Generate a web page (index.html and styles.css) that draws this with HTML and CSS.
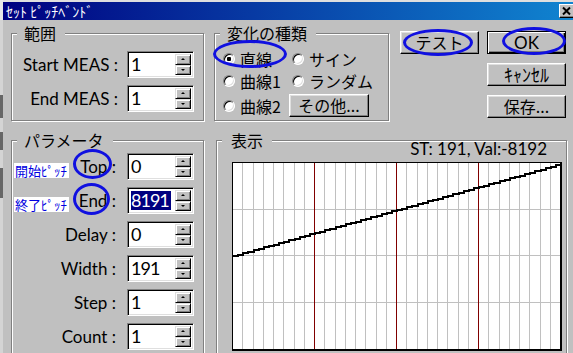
FILE: index.html
```html
<!DOCTYPE html>
<html lang="ja">
<head>
<meta charset="utf-8">
<title>ｾｯﾄ ﾋﾟｯﾁﾍﾞﾝﾄﾞ</title>
<link rel="stylesheet" href="styles.css">
</head>
<body>
<div class="screen">
  <div class="edge"></div>
  <div class="dialog">
    <div class="titlebar">
      <span class="title">ｾｯﾄ ﾋﾟｯﾁﾍﾞﾝﾄﾞ</span>
      <span class="close"><svg width="12" height="10" viewBox="0 0 12 10"><path d="M2 1.5L9 8.5M9 1.5L2 8.5" stroke="#000" stroke-width="2" fill="none"/></svg></span>
    </div>
    <div class="content">
      <div class="toprow">
        <section class="group g-range">
          <div class="legend">範囲</div>
          <div class="rows">
            <div class="row"><span class="lbl">Start MEAS :</span><div class="spinbox"><span class="val">1</span><span class="spin"><span class="sb up"></span><span class="sb down"></span></span></div></div>
            <div class="row"><span class="lbl">End MEAS :</span><div class="spinbox"><span class="val">1</span><span class="spin"><span class="sb up"></span><span class="sb down"></span></span></div></div>
          </div>
        </section>
        <section class="group g-kind">
          <div class="legend">変化の種類</div>
          <div class="radios">
            <div class="rrow r1"><span class="opt"><i class="radio on"></i>直線</span><span class="opt"><i class="radio"></i>サイン</span></div>
            <div class="rrow r2"><span class="opt"><i class="radio"></i>曲線1</span><span class="opt"><i class="radio"></i>ランダム</span></div>
            <div class="rrow r3"><span class="opt"><i class="radio"></i>曲線2</span><button class="btn other">その他...</button></div>
          </div>
        </section>
        <div class="buttons">
          <button class="btn test">テスト</button>
          <button class="btn default ok">OK</button>
          <button class="btn cancel">ｷｬﾝｾﾙ</button>
          <button class="btn save">保存...</button>
        </div>
      </div>
      <div class="bottomrow">
        <section class="group g-param">
          <div class="legend">パラメータ</div>
          <div class="rows">
            <div class="row"><span class="lbl tagged"><span class="tag">開始ﾋﾟｯﾁ</span><span>Top :</span></span><div class="spinbox"><span class="val">0</span><span class="spin"><span class="sb up"></span><span class="sb down"></span></span></div></div>
            <div class="row"><span class="lbl tagged"><span class="tag">終了ﾋﾟｯﾁ</span><span>End :</span></span><div class="spinbox"><span class="val"><span class="sel">8191</span></span><span class="spin"><span class="sb up"></span><span class="sb down"></span></span></div></div>
            <div class="row"><span class="lbl">Delay :</span><div class="spinbox"><span class="val">0</span><span class="spin"><span class="sb up"></span><span class="sb down"></span></span></div></div>
            <div class="row"><span class="lbl">Width :</span><div class="spinbox"><span class="val">191</span><span class="spin"><span class="sb up"></span><span class="sb down"></span></span></div></div>
            <div class="row"><span class="lbl">Step :</span><div class="spinbox"><span class="val">1</span><span class="spin"><span class="sb up"></span><span class="sb down"></span></span></div></div>
            <div class="row"><span class="lbl">Count :</span><div class="spinbox"><span class="val">1</span><span class="spin"><span class="sb up"></span><span class="sb down"></span></span></div></div>
          </div>
        </section>
        <section class="group g-disp">
          <div class="disp-head">
            <div class="legend">表示</div>
            <div class="st">ST: 191, Val:-8192</div>
          </div>
          <svg class="chart" width="330" height="189" viewBox="0 0 330 189" shape-rendering="crispEdges">
            <rect x="0" y="0" width="330" height="189" fill="#fff"/>
            <path d="M10.5 1V187M21.5 1V187M31.5 1V187M41.5 1V187M51.5 1V187M62.5 1V187M72.5 1V187M92.5 1V187M103.5 1V187M113.5 1V187M123.5 1V187M133.5 1V187M144.5 1V187M154.5 1V187M174.5 1V187M185.5 1V187M195.5 1V187M205.5 1V187M215.5 1V187M226.5 1V187M236.5 1V187M256.5 1V187M267.5 1V187M277.5 1V187M287.5 1V187M297.5 1V187M308.5 1V187M318.5 1V187" stroke="#c0c0c0" stroke-width="1" fill="none"/>
            <path d="M1 47.5H328M1 93.5H328M1 140.5H328" stroke="#c0c0c0" stroke-width="1" fill="none"/>
            <path d="M82.5 1V187M164.5 1V187M246.5 1V187" stroke="#800000" stroke-width="1" fill="none"/>
            <path d="M1 94h5.125v-1.4375h5.125v-1.4375h5.125v-1.4375h5.125v-1.4375h5.125v-1.4375h5.125v-1.4375h5.125v-1.4375h5.125v-1.4375
              h5.125v-1.4375h5.125v-1.4375h5.125v-1.4375h5.125v-1.4375h5.125v-1.4375h5.125v-1.4375h5.125v-1.4375h5.125v-1.4375
              h5.125v-1.4375h5.125v-1.4375h5.125v-1.4375h5.125v-1.4375h5.125v-1.4375h5.125v-1.4375h5.125v-1.4375h5.125v-1.4375
              h5.125v-1.4375h5.125v-1.4375h5.125v-1.4375h5.125v-1.4375h5.125v-1.4375h5.125v-1.4375h5.125v-1.4375h5.125v-1.4375
              h5.125v-1.4375h5.125v-1.4375h5.125v-1.4375h5.125v-1.4375h5.125v-1.4375h5.125v-1.4375h5.125v-1.4375h5.125v-1.4375
              h5.125v-1.4375h5.125v-1.4375h5.125v-1.4375h5.125v-1.4375h5.125v-1.4375h5.125v-1.4375h5.125v-1.4375h5.125v-1.4375
              h5.125v-1.4375h5.125v-1.4375h5.125v-1.4375h5.125v-1.4375h5.125v-1.4375h5.125v-1.4375h5.125v-1.4375h5.125v-1.4375
              h5.125v-1.4375h5.125v-1.4375h5.125v-1.4375h5.125v-1.4375h5.125v-1.4375h5.125v-1.4375h5.125v-1.4375h4.125v-1.4375" stroke="#000" stroke-width="2" fill="none"/>
            <path d="M0.5 0V189M0 0.5H330" stroke="#000" stroke-width="1" fill="none"/>
            <path d="M329 0V189M0 188H330" stroke="#000" stroke-width="2" fill="none"/>
          </svg>
        </section>
      </div>
    </div>
  </div>
  <span class="mark m-line"></span>
  <span class="mark m-test"></span>
  <span class="mark m-ok"></span>
  <span class="mark m-top"></span>
  <span class="mark m-end"></span>
</div>
</body>
</html>
```

FILE: styles.css
```css
* { box-sizing: border-box; }
html, body { margin: 0; padding: 0; }
body {
  background: #c0c0c0;
  color: #000;
  font-family: "Noto Sans CJK JP", sans-serif;
}
.screen {
  position: relative;
  width: 573px;
  height: 353px;
  overflow: hidden;
  display: flex;
  background: #c0c0c0;
}
.edge {
  flex: none;
  width: 3px;
  background: linear-gradient(to bottom, #e8e8e8 0 20px, #d4d4d4 20px 95px, #666 95px 118px, #d4d4d4 118px 132px, #666 132px 150px, #d4d4d4 150px 168px, #666 168px 198px, #d4d4d4 198px);
}
.dialog {
  flex: 1;
  min-width: 0;
  display: flex;
  flex-direction: column;
  border-top: 2px solid #dfdfdf;
}
.titlebar {
  flex: none;
  height: 18px;
  display: flex;
  align-items: center;
  justify-content: space-between;
  padding-left: 3px;
  background: linear-gradient(to right, #000080, #1084d0);
  color: #fff;
  font-size: 14px;
  line-height: 18px;
}
.close {
  width: 16px;
  height: 14px;
  margin-right: -2px;
  display: flex;
  align-items: center;
  justify-content: center;
  background: #c0c0c0;
  border: 1px solid;
  border-color: #fff #000 #000 #fff;
  box-shadow: inset -1px -1px #808080;
}
.content { padding: 13px 0 0 8px; }
.toprow { display: flex; align-items: flex-start; }
.group {
  display: flex;
  flex-direction: column;
  border: 1px solid #808080;
  box-shadow: inset 1px 1px #fff, 1px 1px #fff;
}
.legend {
  align-self: flex-start;
  height: 18px;
  margin: -10px 0 0 5px;
  padding: 0 9px 0 7px;
  background: #c0c0c0;
  font-size: 16px;
  line-height: 18px;
  white-space: nowrap;
}
.g-range { width: 193px; height: 88px; }
.rows { display: flex; flex-direction: column; gap: 7px; padding-right: 9px; }
.g-range .rows { margin-top: 9px; }
.row {
  display: grid;
  grid-template-columns: 1fr 67px;
  column-gap: 9px;
  align-items: center;
  height: 27px;
}
.lbl {
  text-align: right;
  font-family: Lato, "Noto Sans CJK JP", sans-serif;
  font-size: 17px;
  line-height: 22px;
  white-space: nowrap;
}
.lbl.tagged { display: flex; justify-content: space-between; align-items: center; }
.tag {
  margin-top: 7px;
  padding: 0 2px 0 1px;
  background: #fff;
  color: #0000e0;
  font-family: "Noto Sans CJK JP", sans-serif;
  font-size: 13px;
  line-height: 15px;
}
.spinbox {
  height: 27px;
  display: flex;
  padding: 2px;
  background: #fff;
  border: 1px solid;
  border-color: #808080 #fff #fff #808080;
  box-shadow: inset 1px 1px #000, inset -1px -1px #dfdfdf;
}
.val {
  flex: 1;
  display: flex;
  align-items: center;
  padding-left: 1px;
  font-family: Lato, sans-serif;
  font-size: 18px;
  line-height: 23px;
  letter-spacing: -1px;
}
.sel {
  display: inline-block;
  line-height: 19px;
  padding: 0 2px 0 0;
  background: #000080;
  color: #fff;
}
.spin { flex: none; width: 16px; display: flex; flex-direction: column; }
.sb {
  flex: 1;
  display: flex;
  align-items: center;
  justify-content: center;
  background: #c0c0c0;
  border: 1px solid;
  border-color: #dfdfdf #000 #000 #dfdfdf;
  box-shadow: inset 1px 1px #fff, inset -1px -1px #808080;
}
.sb::before {
  content: "";
  border-left: 2px solid transparent;
  border-right: 2px solid transparent;
}
.sb.up::before { border-bottom: 2px solid #000; }
.sb.down::before { border-top: 2px solid #000; }

.g-kind { width: 175px; height: 88px; margin-left: 10px; }
.radios { margin-top: 6px; padding-left: 8px; }
.rrow { display: grid; grid-template-columns: 69px auto; align-items: center; }
.r1 { height: 21px; }
.r2 { height: 23px; }
.r3 { height: 23px; margin-top: 2px; }
.opt {
  display: flex;
  align-items: center;
  gap: 5px;
  font-size: 16px;
  line-height: 18px;
  white-space: nowrap;
}
.radio {
  flex: none;
  width: 12px;
  height: 12px;
  border-radius: 50%;
  background: #fff;
  border: 1px solid;
  border-color: #808080 #fff #fff #808080;
  box-shadow: inset 1px 1px #000, inset -1px -1px #dfdfdf;
}
.radio.on { background: radial-gradient(circle, #000 0 2px, #fff 2.5px); }

.btn {
  height: 23px;
  padding: 0;
  display: flex;
  align-items: center;
  justify-content: center;
  background: #c0c0c0;
  color: #000;
  border: 1px solid;
  border-color: #fff #000 #000 #fff;
  box-shadow: inset -1px -1px #808080, inset 1px 1px #dfdfdf;
  font-family: "Noto Sans CJK JP", sans-serif;
  font-size: 16px;
  line-height: 19px;
}
.btn.default {
  border-color: #000;
  box-shadow: inset 1px 1px #fff, inset -1px -1px #000, inset -2px -2px #808080;
}
.btn.ok { font-family: Lato, sans-serif; font-size: 17px; line-height: 20px; }
.btn.cancel { font-size: 18px; }
.other { width: 80px; margin-left: -3px; }
.buttons {
  margin: -2px 0 0 11px;
  display: grid;
  grid-template-columns: 79px 79px;
  grid-template-rows: 23px 23px 23px;
  column-gap: 8px;
  row-gap: 9px;
}
.test { grid-column: 1; grid-row: 1; }
.ok { grid-column: 2; grid-row: 1; }
.cancel { grid-column: 2; grid-row: 2; }
.save { grid-column: 2; grid-row: 3; }

.bottomrow { display: flex; margin-top: 19px; }
.g-param { width: 193px; height: 240px; }
.g-param .rows { margin-top: 4px; padding-left: 2px; }
.g-param .row { column-gap: 11px; }
.g-disp { width: 351px; height: 240px; margin-left: 12px; }
.disp-head {
  display: flex;
  justify-content: space-between;
  height: 28px;
  margin-top: -10px;
}
.disp-head .legend { margin-top: 0; padding-left: 9px; }
.st {
  align-self: flex-end;
  margin-right: 19px;
  font-family: Lato, sans-serif;
  font-size: 17px;
  line-height: 20px;
  white-space: nowrap;
}
.chart { display: block; margin: 3px 0 0 15px; }

.mark {
  position: absolute;
  border: 3px solid #1010e0;
  border-radius: 50%;
  pointer-events: none;
}
.m-line { left: 213px; top: 40px; width: 74px; height: 28px; }
.m-test { left: 403px; top: 29px; width: 70px; height: 27px; }
.m-ok { left: 502px; top: 27px; width: 64px; height: 28px; }
.m-top { left: 73px; top: 149px; width: 39px; height: 30px; }
.m-end { left: 73px; top: 183px; width: 37px; height: 32px; }
```
